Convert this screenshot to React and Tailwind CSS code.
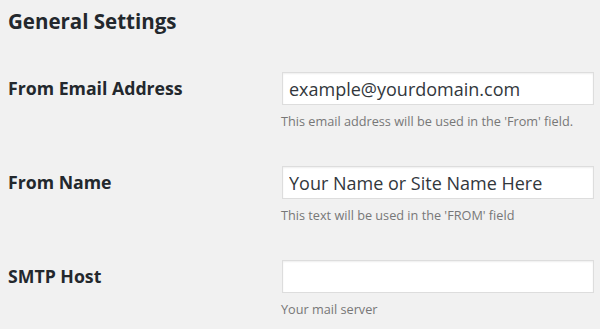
import React from 'react';

// 一個設定列：左邊標籤，右邊輸入框 + 說明文字
function SettingRow({ label, value, help }) {
  return (
    <div className="flex items-start h-[94px]">
      <div className="w-[274px] h-[33px] flex items-center text-[17.7px] font-bold text-[#23282d]">
        {label}
      </div>
      <div className="w-[312px]">
        <input
          type="text"
          defaultValue={value}
          className="block w-full h-[33px] bg-white border border-[#dddddd] shadow-[inset_0_1px_2px_rgba(0,0,0,0.07)] px-[6px] text-[18px] text-[#32373c] outline-none"
        />
        <p className="mt-[7px] -ml-[1px] text-[12.7px] leading-[18px] text-[#777777]">{help}</p>
      </div>
    </div>
  );
}

function App() {
  return (
    <div
      className="w-[600px] h-[329px] overflow-hidden bg-[#f1f1f1] pl-2"
      style={{ fontFamily: '"Open Sans", "Noto Sans", sans-serif' }}
    >
      {/* 標題 */}
      <h2 className="pt-[6px] h-[72px] text-[20.5px] leading-[30px] font-bold text-[#23282d]">
        General Settings
      </h2>

      <SettingRow
        label="From Email Address"
        value="example@yourdomain.com"
        help="This email address will be used in the 'From' field."
      />
      <SettingRow
        label="From Name"
        value="Your Name or Site Name Here"
        help="This text will be used in the 'FROM' field"
      />
      <SettingRow label="SMTP Host" value="" help="Your mail server" />
    </div>
  );
}

export default App;
